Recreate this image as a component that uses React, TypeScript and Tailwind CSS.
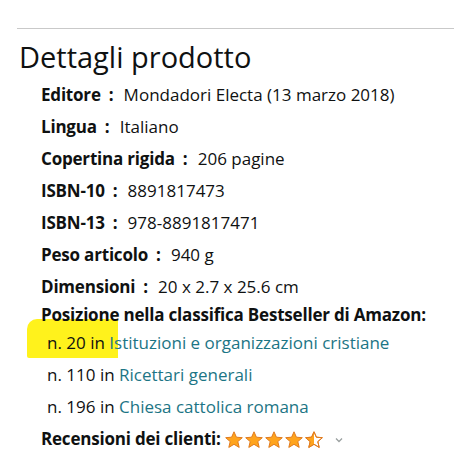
import React from "react";

const font = { fontFamily: '"Open Sans", "Noto Sans", Arial, sans-serif' };

function Row({ label, value }: { label: string; value: string }) {
  return (
    <div className="flex h-[32px] items-center leading-[32px] whitespace-nowrap">
      <span className="font-bold tracking-[-0.2px]">{label}</span>
      <span className="font-bold ml-[8px] mr-[10px]">:</span>
      <span>{value}</span>
    </div>
  );
}

function Star({ half, x }: { half?: boolean; x: number }) {
  const pts = "9,0.8 11.4,6.2 17.3,6.7 12.8,10.6 14.2,16.4 9,13.3 3.8,16.4 5.2,10.6 0.7,6.7 6.6,6.2";
  return (
    <g transform={`translate(${x},0)`}>
      {half ? (
        <>
          <defs>
            <clipPath id="halfclip">
              <rect x="0" y="0" width="9" height="18" />
            </clipPath>
          </defs>
          <polygon points={pts} fill="#fff" stroke="#E07B1F" strokeWidth="1" strokeLinejoin="round" />
          <polygon points={pts} fill="#FFA41C" clipPath="url(#halfclip)" />
          <polygon points={pts} fill="none" stroke="#E07B1F" strokeWidth="1" strokeLinejoin="round" />
        </>
      ) : (
        <polygon points={pts} fill="#FFA41C" stroke="#E07B1F" strokeWidth="1" strokeLinejoin="round" />
      )}
    </g>
  );
}

export default function App() {
  return (
    <div className="w-[454px] h-[459px] bg-white text-[#0F1111] overflow-hidden" style={font}>
      <div className="pt-[28px] pl-[17px]">
        <div className="border-t border-[#c9c9c9]" />
      </div>
      <h2 className="mt-[10px] ml-[19px] text-[29px] leading-[36px] font-normal text-[#0F1111]">
        Dettagli prodotto
      </h2>
      <div className="relative mt-[4px] pl-[41px] text-[17px]">
        <div
          className="absolute left-[27px] top-[240px] w-[91px] h-[39px] bg-[#fff21c] rounded-tl-[10px] rounded-bl-[2px]"
          aria-hidden
        />
        <div className="relative">
          <Row label="Editore" value="Mondadori Electa (13 marzo 2018)" />
          <Row label="Lingua" value="Italiano" />
          <Row label="Copertina rigida" value="206 pagine" />
          <Row label="ISBN-10" value="8891817473" />
          <Row label="ISBN-13" value="978-8891817471" />
          <Row label="Peso articolo" value="940 g" />
          <Row label="Dimensioni" value="20 x 2.7 x 25.6 cm" />
          <div className="h-[24px] font-bold whitespace-nowrap flex items-end tracking-[-0.2px]">
            <span className="leading-[24px]">Posizione nella classifica Bestseller di Amazon:</span>
          </div>
          <div className="pl-[6px]">
            <div className="h-[32px] leading-[32px] whitespace-nowrap">
              n. 20 in <span className="text-[#1c7585]">Istituzioni e organizzazioni cristiane</span>
            </div>
            <div className="h-[32px] leading-[32px] whitespace-nowrap">
              n. 110 in <span className="text-[#1c7585]">Ricettari generali</span>
            </div>
            <div className="h-[32px] leading-[32px] whitespace-nowrap">
              n. 196 in <span className="text-[#1c7585]">Chiesa cattolica romana</span>
            </div>
          </div>
          <div className="h-[32px] flex items-center whitespace-nowrap">
            <span className="font-bold tracking-[-0.2px]">Recensioni dei clienti:</span>
            <svg width="100" height="18" viewBox="0 0 100 18" className="ml-[4px] mt-[1px]">
              <Star x={0} />
              <Star x={20} />
              <Star x={40} />
              <Star x={60} />
              <Star x={80} half />
            </svg>
            <svg width="10" height="8" viewBox="0 0 10 8" className="ml-[9px] mt-[2px]">
              <path d="M2 2.5 L5 5.5 L8 2.5" fill="none" stroke="#9aa0a0" strokeWidth="1.3" />
            </svg>
          </div>
        </div>
      </div>
    </div>
  );
}
